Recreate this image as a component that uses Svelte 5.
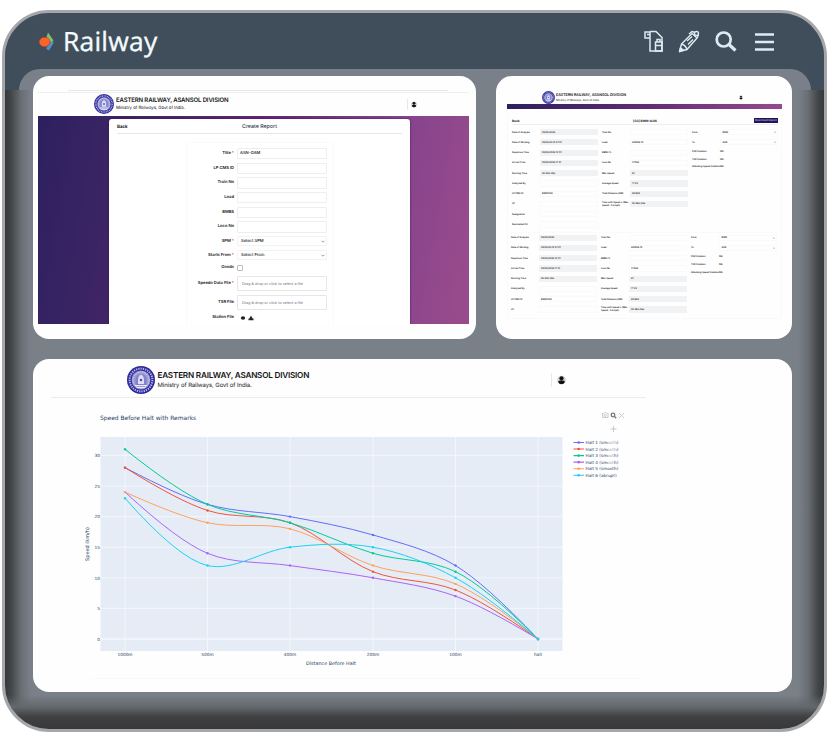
<script>
  const formRows = [
    { label: 'Title', req: true, value: 'ASN-GAM', kind: 'text' },
    { label: 'LP CMS ID', kind: 'text' },
    { label: 'Train No', kind: 'text' },
    { label: 'Load', kind: 'text' },
    { label: 'BMBS', kind: 'text' },
    { label: 'Loco No', kind: 'text' },
    { label: 'SPM', req: true, value: 'Select SPM', kind: 'select' },
    { label: 'Starts From', req: true, value: 'Select From', kind: 'select' },
    { label: 'Goods', kind: 'check' },
    { label: 'Speedo Data File', req: true, value: 'Drag & drop or click to select a file', kind: 'drop' },
    { label: 'TSR File', value: 'Drag & drop or click to select a file', kind: 'drop' },
    { label: 'Station File', kind: 'station' }
  ];

  const left = [
    ['Date of Analysis', '08/05/2025', true],
    ['Date of Working', '08/05/25 12:57:01', true],
    ['Departure Time', '08/05/2025 13:01', true],
    ['Arrival Time', '08/05/2025 17:21', true],
    ['Running Time', '4h 20m 28s', true],
    ['Analyzed By', '', false],
    ['LP CMS ID', 'BWN1028', false],
    ['LP', '', false],
    ['Designation', '', false],
    ['Nominated CLI', '', false]
  ];
  const middle = [
    ['Train No', '', false],
    ['Load', 'AGN09-10', false],
    ['BMBS %', '', false],
    ['Loco No', '37054', false],
    ['Max Speed', '61', true],
    ['Average Speed', '77.22', true],
    ['Total Distance (KM)', '60.988', true],
    ['Time with Speed ≥ (Max Speed - 5 kmph)', '0h 29m 36s', true]
  ];
  const reports = [left, left.slice(0, 8)];

  const xs = [125, 207.5, 290, 373, 455.5, 538];
  const xLabels = ['1000m', '500m', '400m', '200m', '100m', 'halt'];
  const ticks = [0, 5, 10, 15, 20, 25, 30];
  const yOf = (v) => 639 - v * 6.12;
  const series = [
    { name: 'Halt 1 (smooth)', color: '#636efa', v: [28, 22, 20, 17, 12, 0] },
    { name: 'Halt 2 (smooth)', color: '#ef553b', v: [28, 21, 19, 11, 8, 0] },
    { name: 'Halt 3 (smooth)', color: '#00cc96', v: [31, 22, 19, 14, 11, 0] },
    { name: 'Halt 4 (smooth)', color: '#ab63fa', v: [24, 14, 12, 10, 7, 0] },
    { name: 'Halt 5 (smooth)', color: '#ffa15a', v: [24, 19, 18, 12, 9, 0] },
    { name: 'Halt 6 (abrupt)', color: '#19d3f3', v: [23, 12, 15, 15, 10, 0] }
  ];

  // Centripetal Catmull-Rom control points around p
  function tangent(a, p, b) {
    const d1 = [a[0] - p[0], a[1] - p[1]];
    const d2 = [b[0] - p[0], b[1] - p[1]];
    const n1 = Math.sqrt(Math.hypot(...d1));
    const n2 = Math.sqrt(Math.hypot(...d2));
    const n = [0, 1].map((i) => n2 * n2 * d1[i] - n1 * n1 * d2[i]);
    const s1 = 3 * n2 * (n1 + n2);
    const s2 = 3 * n1 * (n1 + n2);
    return [
      [p[0] + n[0] / s1, p[1] + n[1] / s1],
      [p[0] - n[0] / s2, p[1] - n[1] / s2]
    ];
  }
  function spline(values) {
    const p = values.map((v, i) => [xs[i], yOf(v)]);
    const t = [];
    for (let i = 1; i < p.length - 1; i++) t.push(tangent(p[i - 1], p[i], p[i + 1]));
    let d = `M${p[0]}Q${t[0][0]} ${p[1]}`;
    for (let i = 2; i < p.length - 1; i++) d += `C${t[i - 2][1]} ${t[i - 1][0]} ${p[i]}`;
    return d + `Q${t[t.length - 1][1]} ${p[p.length - 1]}`;
  }
</script>

{#snippet emblem()}
  <svg class="emblem" viewBox="0 0 28 28">
    <circle cx="14" cy="14" r="14" fill="#2d2b9b" />
    <circle cx="14" cy="14" r="11.4" fill="none" stroke="#b9b8e4" stroke-width="2" stroke-dasharray="1.3 1" />
    <circle cx="14" cy="14" r="9.400" fill="#9a9ad6" />
    <circle cx="14" cy="14" r="8" fill="none" stroke="#d6d6f0" stroke-width="1" stroke-dasharray="1.6 .8" />
    <path d="M8.5 19v-5.500a5.500 5.500 0 0 1 11 0V19z" fill="#8482cc" />
    <path d="M11 18v-5l1-3 2-1.500 2 1.500 1 3v5z" fill="#dedef4" />
    <circle cx="14" cy="14" r="1.300" fill="#5351b3" />
    <path d="M8 19.500h12M9.500 21.500h9" stroke="#eeeefb" stroke-width="1.100" />
  </svg>
{/snippet}

{#snippet brand()}
  {@render emblem()}
  <div class="names">
    <strong>EASTERN RAILWAY, ASANSOL DIVISION</strong>
    <span>Ministry of Railways, Govt of India.</span>
  </div>
{/snippet}

{#snippet user()}
  <svg class="user" viewBox="0 0 10 10">
    <circle cx="5" cy="5" r="4.800" fill="#c9d0d4" />
    <circle cx="5" cy="3" r="2.300" fill="#111" />
    <path d="M1.300 7.500Q1.500 5.400 5 5.400t3.700 2.100Q7.500 9.600 5 9.600T1.300 7.500z" fill="#111" />
  </svg>
{/snippet}

<div class="frame">
  <header>
    <svg class="mark" viewBox="0 0 16 20" width="16" height="20">
      <path d="M9 .5l5.500 8-2.500 2.500-4.500-6z" fill="#83bf72" />
      <path d="M12 10l3 0-5 8.500-3-2z" fill="#4d91cf" />
      <path d="M3.500 5.500h5l2.500 3-.5 3.500-3 2.500H3.500L.5 12V8z" fill="#fa6428" stroke="#b9483a" stroke-width=".6" />
    </svg>
    <h1>Railway</h1>
    <nav>
      <svg width="20" height="23" viewBox="0 0 20 23" fill="none" stroke="#dcebf3" stroke-width="1.500">
        <path d="M1 2h5v6H1zM6 1.500h6l6 6V21H6V8M3 4.500h3" />
        <path d="M11.500 12h6.500v9h-6.500zM12 15.500h6M13 12V9.500h3V12" />
      </svg>
      <svg width="22" height="23" viewBox="0 0 22 23" fill="none" stroke="#dcebf3" stroke-width="1.400" stroke-linejoin="round">
        <path d="M1.500 21.500L3.500 14 14 3.500l5 4.500L9 19.500z" />
        <path d="M3.500 14q4 1 5.500 5.500M11 4l3-2.500 3 1M19 8l1.500-3M9 11l5-4.500M10 14.500l5-5" />
        <circle cx="18.500" cy="3.500" r="2" />
        <path d="M1.500 21.500l4-1.500-3-2z" fill="#dcebf3" />
      </svg>
      <svg width="22" height="22" viewBox="0 0 22 22" fill="none" stroke="#dcebf3" stroke-width="2.700">
        <circle cx="8.700" cy="8.500" r="7" />
        <path d="M14 13.500l6.500 6" stroke-width="3.200" />
      </svg>
      <svg width="19" height="20" viewBox="0 0 19 20" stroke="#dcebf3" stroke-width="2.600">
        <path d="M0 2.500h19M0 10h19M0 17.500h19" />
      </svg>
    </nav>
  </header>
  <div class="shoulder"><div></div></div>

  <main>
    <section class="card create">
      <div class="topline"></div>
      <div class="bar">{@render brand()}<i class="sep"></i>{@render user()}</div>
      <div class="stage">
        <div class="sheet">
          <div class="sheethead"><b>Back</b><span>Create Report</span></div>
          <div class="form">
            {#each formRows as r}
              <div class="row {r.kind}">
                <label>{r.label}{#if r.req}<em>*</em>{/if}</label>
                {#if r.kind === 'check'}
                  <i class="box"></i>
                {:else if r.kind === 'station'}
                  <svg width="20" height="6" viewBox="0 0 20 6">
                    <ellipse cx="6" cy="3" rx="2.200" ry="1.700" fill="#222" />
                    <path d="M14 .5l1.600 3h.9v1.800h-5V3.500h.9z" fill="#222" />
                  </svg>
                {:else}
                  <div class="field">
                    <span>{r.value ?? ''}</span>
                    {#if r.kind === 'select'}
                      <svg width="4" height="3" viewBox="0 0 4 3"><path d="M.5.7L2 2.200 3.500.7" fill="none" stroke="#777" stroke-width=".7" /></svg>
                    {/if}
                  </div>
                {/if}
              </div>
            {/each}
          </div>
        </div>
      </div>
    </section>

    <section class="card report">
      <div class="bar">{@render brand()}{@render user()}</div>
      <div class="strip"></div>
      <div class="body">
        <div class="title"><b>Back</b><strong>[SG] BWN-ASN</strong><span class="btn">Download Report</span></div>
        {#each reports as rep, k}
          <div class="grid" class:second={k === 1}>
            <div>
              {#each rep as [l, v, f]}
                <div class="item"><label>{l}</label><span class="val" class:fill={f}>{v}</span></div>
              {/each}
            </div>
            <div>
              {#each middle as [l, v, f]}
                <div class="item"><label>{l}</label><span class="val" class:fill={f}>{v}</span></div>
              {/each}
            </div>
            <div class="third">
              {#each [['From', 'BWN'], ['To', 'ASN']] as [l, v]}
                <div class="item"><label>{l}</label><span class="val sel">{v}<svg width="2" height="2" viewBox="0 0 4 4"><path d="M0 1l2 2 2-2" fill="none" stroke="#555" /></svg></span></div>
              {/each}
              {#each ['PSR Violation', 'TSR Violation', 'Attacking Speed Violation'] as l}
                <div class="item small"><label>{l}</label><span class="nil">NIL</span></div>
              {/each}
            </div>
          </div>
        {/each}
      </div>
    </section>

    <section class="card analysis">
      <div class="bar">{@render brand()}<i class="sep"></i>{@render user()}</div>
      <svg class="chart" width="759" height="294" viewBox="33 398 759 294">
        <path d="M90 678.500H640" stroke="#f9fafa" />
        <text x="100" y="420" font-size="5.950" class="ink">Speed Before Halt with Remarks</text>
        <rect x="100.500" y="437" width="462" height="214" fill="#e5ecf6" />
        <g stroke="#f3f7fc" stroke-width="1">
          {#each xs as x}<path d="M{x} 437V651" />{/each}
          {#each ticks as t}<path d="M100.500 {yOf(t)}H562.500" stroke-width={t === 0 ? 1.5 : 1} />{/each}
        </g>
        <g font-size="4.300" class="ink">
          {#each xs as x, i}<text {x} y="656" text-anchor="middle">{xLabels[i]}</text>{/each}
          {#each ticks as t}<text x="100" y={yOf(t) + 1.7} text-anchor="end">{t}</text>{/each}
        </g>
        <text x="331" y="665" text-anchor="middle" font-size="4.850" class="ink">Distance Before Halt</text>
        <text transform="translate(88.500 544) rotate(-90)" text-anchor="middle" font-size="5" class="ink">Speed (km/h)</text>
        {#each series as s, i}
          <path d={spline(s.v)} fill="none" stroke={s.color} stroke-width="1" />
          {#each s.v as v, j}<circle cx={xs[j]} cy={yOf(v)} r="1.200" fill={s.color} />{/each}
          <path d="M573.500 {442.500 + i * 6.55}h10.500" stroke={s.color} stroke-width="1.100" />
          <circle cx="578.700" cy={442.5 + i * 6.55} r="1.300" fill={s.color} />
          <text x="585.500" y={444 + i * 6.55} font-size="4.200" class="ink">{s.name}</text>
        {/each}
        <g fill="none" stroke="#c3c5c8" stroke-width=".9">
          <path d="M602.500 413.500h1.500l.8-1h1.400l.8 1h1v4h-5.500z" />
          <circle cx="605.200" cy="415.500" r="1" />
          <path d="M619 413l5 5M624 413l-5 5M610.500 429h6M613.500 426v6" />
          <circle cx="613" cy="415" r="1.800" stroke="#777" stroke-width="1.300" />
          <path d="M614.500 416.500l1.700 1.700" stroke="#777" stroke-width="1.300" />
        </g>
        <g fill="#fff" opacity=".5">
          <rect x="608" y="440" width="8" height="12" />
          <rect x="608" y="453" width="6" height="12" />
        </g>
      </svg>
    </section>
  </main>
</div>

<style>
  :global(body) { margin: 0; background: #fff; }
  .frame, .frame * { box-sizing: border-box; }
  .frame {
    width: 825px; height: 722px; margin: 10px 0 0 2px;
    border: 3px solid #a5a7aa; border-radius: 47px; overflow: hidden;
    background:
      linear-gradient(to top, #38383b 0, #3f4042 12px, #62686c 22px, transparent 34px),
      linear-gradient(to right, #36383a 0, #434648 6px, #686e73 16px, transparent 26px),
      linear-gradient(to left, #36383a 0, #434648 6px, #686e73 16px, transparent 26px),
      #7a8088;
    font-family: Inter, "Liberation Sans", sans-serif; color: #161616;
    text-rendering: geometricPrecision;
  }
  header {
    height: 56px; background: #3f4e5a; display: flex; align-items: center;
    padding: 1px 50px 0 33px;
  }
  h1 { margin: 0 0 0 8px; font: 500 26.500px/40px "Open Sans", "Noto Sans", sans-serif; color: #f3fbff; letter-spacing: .2px; -webkit-text-stroke: .35px #f3fbff; position: relative; top: -1px; }
  .mark { margin-left: 1px; }
  nav { margin-left: auto; display: flex; align-items: center; gap: 14.500px; }
  nav svg:last-child { margin-left: 4px; }
  .shoulder { height: 21px; background: #3f4e5a; padding: 0 13px 0 14px; }
  .shoulder div { height: 21px; background: #7a808a; border-radius: 23px 23px 0 0; }
  main {
    position: relative; margin: -14px 0 0 28px; width: 759px;
    display: grid; grid-template: 263px 333px / 443px 296px; gap: 20px;
  }
  .card { background: #fefefe; border-radius: 16px; overflow: hidden; }
  .analysis { grid-column: 1 / 3; }
  .bar { display: flex; align-items: center; }
  .emblem, .user { flex: none; display: block; }
  .names { display: flex; flex-direction: column; white-space: nowrap; }
  .names strong { font-weight: 600; }
  .sep { width: 1px; background: #e8e8e8; margin-left: auto; }

  .create { padding-left: 5px; }
  .topline { height: 16.500px; width: 431px; border-bottom: 1px solid #eee; }
  .topline::before { content: ""; display: block; height: 14px; margin: 0 21px 0 30px; border-bottom: 1px solid #e8e8e8; }
  .create .bar { height: 23px; width: 431px; padding: 0 52px 0 56px; }
  .create .emblem { width: 20px; height: 20px; margin-right: 2px; }
  .create .names strong { font-size: 6.050px; line-height: 9px; letter-spacing: -.16px; }
  .create .names span { font-size: 4.350px; line-height: 7px; letter-spacing: -.06px; }
  .create .sep { height: 11px; margin-right: 3px; }
  .create .user { width: 6px; height: 7px; }
  .stage { width: 431px; height: 208.500px; padding: 3px 59px 0 71px; background: linear-gradient(100deg, #2d205f 0, #3b2464 17%, #642473 48%, #84438c 78%, #974a8c 96%); }
  .sheet { height: 205.500px; background: #fff; border-radius: 3px 3px 0 0; padding: 0 8px; box-shadow: 0 0 2px #3b1155; clip-path: inset(-3px -3px 0 -3px); }
  .sheethead { height: 15px; padding-top: 3.500px; border-bottom: 1px solid #e6e6e6; position: relative; display: flex; justify-content: center; align-items: center; font-size: 5.250px; font-weight: 500; color: #253044; }
  .sheethead b { position: absolute; left: 0; font-size: 4.400px; color: #111; }
  .form { margin: 8px 68px 0 69px; height: 182px; padding-top: 3.900px; border: 1px solid #fafafa; border-bottom: 0; }
  .row { display: flex; align-items: center; height: 14.650px; font-size: 4.150px; }
  .row label { width: 47px; text-align: right; margin-right: 3px; font-weight: 600; white-space: nowrap; letter-spacing: -.04px; }
  .row em { color: #f33; font-style: normal; margin-left: 1px; }
  .field { width: 90px; height: 11.500px; border: 1px solid #eee; border-radius: 1px; display: flex; align-items: center; justify-content: space-between; padding: .5px 1.500px 0 2px; font-weight: 500; white-space: nowrap; }
  .select { height: 14px; }
  .select .field { height: 10.500px; padding-left: 3px; border-color: #f3f3f3; }
  .check { height: 11.500px; }
  .box { width: 5.500px; height: 5.500px; border: 1px solid #bbb; border-radius: 1px; }
  .drop { height: 19.300px; }
  .drop .field { height: 15.500px; padding-left: 4px; color: #6b7280; border-color: #e6e6e6; font-size: 3.750px; font-weight: 400; }
  .station { height: 11px; }

  .report { padding: 14px 10px 0 11px; }
  .report .bar { height: 14px; padding: 0 39px 0 35px; }
  .report .emblem { width: 13px; height: 13px; margin-right: 1px; }
  .report .names strong { font-size: 3.780px; line-height: 5.500px; letter-spacing: -.1px; }
  .report .names span { font-size: 2.750px; line-height: 4.500px; letter-spacing: -.04px; }
  .report .user { width: 4px; height: 5px; margin-left: auto; }
  .strip { height: 5px; background: linear-gradient(90deg, #2c205f, #612b72 50%, #964a8e); }
  .body { border: 1px solid #fafafa; border-top: 0; height: 210px; padding: 8px 3px 0 4px; }
  .title { height: 8px; border-bottom: 1px solid #eee; display: flex; align-items: center; justify-content: space-between; font-size: 3.200px; }
  .title strong { font-size: 3.200px; margin-left: 16px; }
  .btn { background: #20145f; color: #ddd; width: 24px; height: 5.500px; line-height: 5.500px; text-align: center; font-size: 2.700px; white-space: nowrap; }
  .grid { display: grid; grid-template-columns: 90px 90px 86px; margin-top: 2px; height: 105px; }
  .grid.second { margin-left: -1px; height: 86px; margin-top: -.5px; border-top: 1px solid #fafafa; }
  .item { display: flex; align-items: center; height: 10.270px; font-size: 2.250px; font-weight: 600; line-height: 3px; }
  .item label { width: 27.500px; flex: none; }
  .val { width: 58px; height: 6.200px; padding-left: 1.500px; border: 1px solid #fafafa; display: flex; align-items: center; justify-content: space-between; }
  .val.fill { background: #f1f2f4; border-color: #f1f2f4; }
  .third .item label { width: 28px; white-space: nowrap; }
  .sel { padding-right: 1px; }
  .item.small { height: 7.700px; }
  .nil { color: #111; font-size: 2.500px; }

  .analysis .bar { height: 39px; width: 595px; margin-left: 18px; border-bottom: 1.500px solid #ececec; padding: 4px 80px 0 76px; }
  .analysis .emblem { width: 28px; height: 28px; margin-right: 2.500px; }
  .analysis .names strong { font-size: 8.200px; line-height: 11px; letter-spacing: -.23px; }
  .analysis .names span { font-size: 5.950px; line-height: 9px; letter-spacing: -.08px; }
  .analysis .sep { height: 14px; margin-right: 5px; }
  .analysis .user { width: 9px; height: 10px; }
  .chart { display: block; }
  .ink { fill: #2a3f5f; font-family: "DejaVu Sans", sans-serif; }
</style>
